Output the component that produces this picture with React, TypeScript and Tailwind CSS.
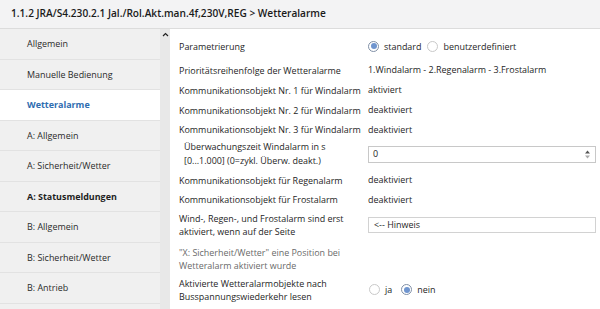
import React from 'react'

const navItems = [
  { label: 'Allgemein' },
  { label: 'Manuelle Bedienung' },
  { label: 'Wetteralarme', active: true },
  { label: 'A: Allgemein' },
  { label: 'A: Sicherheit/Wetter' },
  { label: 'A: Statusmeldungen', bold: true },
  { label: 'B: Allgemein' },
  { label: 'B: Sicherheit/Wetter' },
  { label: 'B: Antrieb' },
  { label: '' },
]

function Radio({ checked, label }: { checked?: boolean; label: string }) {
  return (
    <label className="flex items-center gap-[5px]">
      <span
        className={
          checked
            ? 'flex h-[11px] w-[11px] items-center justify-center rounded-full border border-[#7f8fa6] bg-white'
            : 'h-[11px] w-[11px] rounded-full border border-[#c9c9c9] bg-white'
        }
      >
        {checked && <span className="h-[6px] w-[6px] rounded-full bg-[#6f95cf]" />}
      </span>
      <span>{label}</span>
    </label>
  )
}

function Row({
  className,
  label,
  children,
  indent,
}: {
  className: string
  label: React.ReactNode
  children?: React.ReactNode
  indent?: boolean
}) {
  return (
    <div className={'flex items-center ' + className}>
      <div className={'w-[189px] shrink-0 leading-[13px] ' + (indent ? 'pl-[5px]' : '')}>{label}</div>
      <div className="flex-1">{children}</div>
    </div>
  )
}

export default function App() {
  return (
    <div className="flex h-[309px] w-[600px] flex-col overflow-hidden bg-white font-['Open_Sans',sans-serif] text-[8.95px] text-[#1e1e1e]">
      {/* Header */}
      <div className="flex h-[29px] shrink-0 items-center border-b border-[#dcdcdc] bg-[#f3f3f4] px-[11px] text-[10.15px] font-semibold text-[#1a1a1a]">
        1.1.2 JRA/S4.230.2.1 Jal./Rol.Akt.man.4f,230V,REG &gt; Wetteralarme
      </div>

      <div className="flex flex-1 overflow-hidden">
        {/* Sidebar */}
        <div className="w-[160px] shrink-0 bg-[#f0f0f0]">
          {navItems.map((item, i) => (
            <div
              key={i}
              className={
                'flex h-[30.5px] items-center border-b border-[#e2e2e2] pl-[27px] ' +
                (item.active
                  ? 'bg-white font-bold text-[#2d6cb0]'
                  : item.bold
                    ? 'font-bold text-[#1e1e1e]'
                    : 'text-[#2a2a2a]')
              }
            >
              {item.label}
            </div>
          ))}
        </div>

        {/* Scrollbar */}
        <div className="flex w-[10px] shrink-0 justify-center bg-[#e8e8e8] pt-[3px]">
          <svg width="7" height="5" viewBox="0 0 7 5">
            <path d="M1 4 L3.5 1.5 L6 4" fill="none" stroke="#222" strokeWidth="1.2" />
          </svg>
        </div>

        {/* Content */}
        <div className="flex flex-1 flex-col pl-[9px] pr-[4px] pt-[6px]">
          <Row className="h-[23px]" label="Parametrierung">
            <div className="flex items-center gap-[6px]">
              <Radio checked label="standard" />
              <Radio label="benutzerdefiniert" />
            </div>
          </Row>
          <Row className="mt-[2px] h-[20px]" label="Prioritätsreihenfolge der Wetteralarme">
            1.Windalarm - 2.Regenalarm - 3.Frostalarm
          </Row>
          <Row className="h-[20px]" label="Kommunikationsobjekt Nr. 1 für Windalarm">
            aktiviert
          </Row>
          <Row className="h-[20px]" label="Kommunikationsobjekt Nr. 2 für Windalarm">
            deaktiviert
          </Row>
          <Row className="h-[19px]" label="Kommunikationsobjekt Nr. 3 für Windalarm">
            deaktiviert
          </Row>
          <Row
            className="mt-[1px] h-[28px]"
            indent
            label={
              <span className="block leading-[14px]">
                Überwachungszeit Windalarm in s
                <br />
                [0...1.000] (0=zykl. Überw. deakt.)
              </span>
            }
          >
            <div className="flex h-[17px] items-center justify-between border border-[#c8c8c8] bg-white pl-[4px] pr-[5px]">
              <span>0</span>
              <span className="flex flex-col items-center">
                <svg width="5" height="4" viewBox="0 0 5 4">
                  <path d="M0 3.5 L2.5 0.5 L5 3.5 Z" fill="#555" />
                </svg>
                <svg width="5" height="4" viewBox="0 0 5 4" className="mt-[1px]">
                  <path d="M0 0.5 L2.5 3.5 L5 0.5 Z" fill="#aaa" />
                </svg>
              </span>
            </div>
          </Row>
          <Row className="mt-[2px] h-[20px]" label="Kommunikationsobjekt für Regenalarm">
            deaktiviert
          </Row>
          <Row className="h-[19px]" label="Kommunikationsobjekt für Frostalarm">
            deaktiviert
          </Row>
          <Row
            className="mt-[2px] h-[28px]"
            label={
              <>
                Wind-, Regen-, und Frostalarm sind erst
                <br />
                aktiviert, wenn auf der Seite
              </>
            }
          >
            <div className="flex h-[16px] items-center border border-[#d2d2d2] bg-white pl-[5px]">
              &lt;-- Hinweis
            </div>
          </Row>
          <Row
            className="mt-[6px] h-[28px] text-[#6a6a6a]"
            label={
              <>
                "X: Sicherheit/Wetter" eine Position bei
                <br />
                Wetteralarm aktiviert wurde
              </>
            }
          />
          <Row
            className="mt-[3px] h-[28px]"
            label={
              <>
                Aktivierte Wetteralarmobjekte nach
                <br />
                Busspannungswiederkehr lesen
              </>
            }
          >
            <div className="flex items-center gap-[9px] pl-[1px]">
              <Radio label="ja" />
              <Radio checked label="nein" />
            </div>
          </Row>
        </div>
      </div>
    </div>
  )
}
